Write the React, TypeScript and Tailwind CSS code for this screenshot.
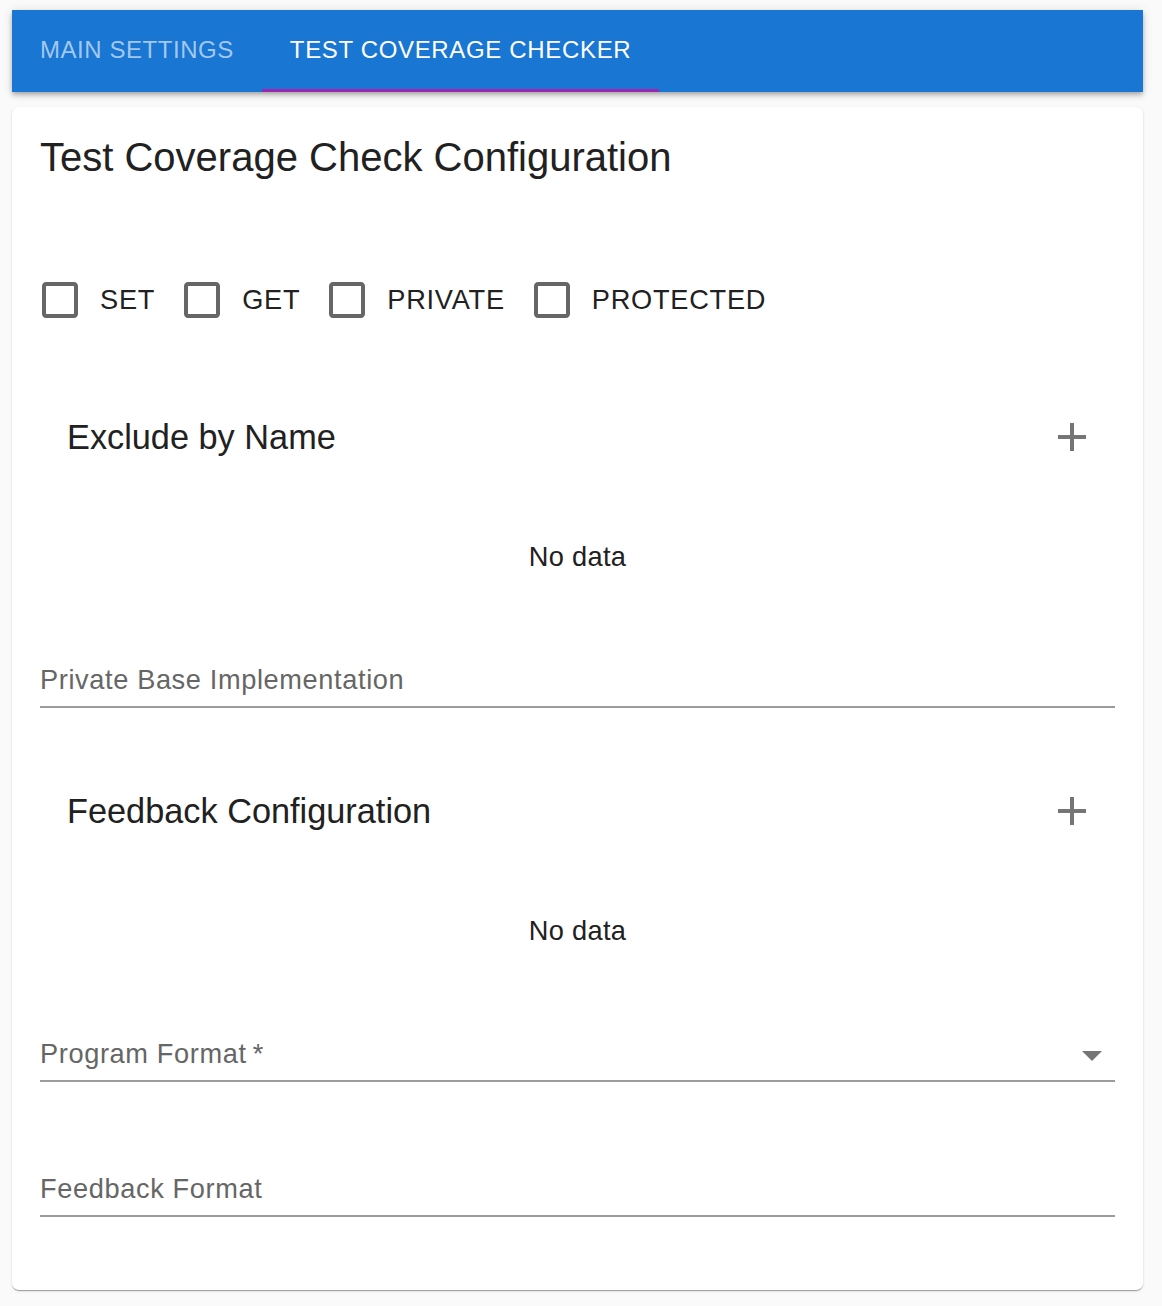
import React from "react";

const font = { fontFamily: '"Liberation Sans", Arial, Helvetica, sans-serif' };

function CheckIcon() {
  return (
    <svg width="48" height="48" viewBox="0 0 24 24" className="shrink-0">
      <path
        fill="#666666"
        d="M19 5v14H5V5h14m0-2H5c-1.11 0-2 .9-2 2v14c0 1.1.89 2 2 2h14c1.1 0 2-.9 2-2V5c0-1.1-.9-2-2-2z"
      />
    </svg>
  );
}

function PlusIcon() {
  return (
    <svg width="48" height="48" viewBox="0 0 24 24" className="shrink-0">
      <path fill="#757575" d="M19 13h-6v6h-2v-6H5v-2h6V5h2v6h6v2z" />
    </svg>
  );
}

function ArrowIcon() {
  return (
    <svg width="48" height="48" viewBox="0 0 24 24" className="shrink-0">
      <path fill="#757575" d="M7 10l5 5 5-5z" />
    </svg>
  );
}

function Check({ label, last }: { label: string; last?: boolean }) {
  return (
    <div className={`flex items-center ${last ? "" : "mr-[23px]"}`}>
      <CheckIcon />
      <span className="ml-[16px] text-[27.2px] leading-[32px] tracking-[0.75px] text-[#212121]">
        {label}
      </span>
    </div>
  );
}

function Section({ title }: { title: string }) {
  return (
    <>
      <div className="flex h-[64px] items-center justify-between pl-[27px] pr-[19px]">
        <span className="text-[34.3px] leading-[40px] text-[#212121]">{title}</span>
        <PlusIcon />
      </div>
      <div className="mt-[68px] flex h-[40px] items-center justify-center">
        <span className="text-[27.2px] leading-[32px] tracking-[0.3px] text-[#212121]">No data</span>
      </div>
    </>
  );
}

function Field({ label, select, className }: { label: string; select?: boolean; className?: string }) {
  return (
    <div className={className}>
      <div className="flex h-[42px] items-start justify-between">
        <span className="text-[27.2px] leading-[32px] tracking-[0.62px] text-[#666666]">{label}</span>
        {select && (
          <div className="-mr-[1px] -mt-[7px]">
            <ArrowIcon />
          </div>
        )}
      </div>
      <div className="h-[2px] bg-[#9b9b9b]" />
    </div>
  );
}

export default function App() {
  return (
    <div className="min-h-[1306px] bg-[#fafafa] pt-[10px]" style={font}>
      <div className="ml-[12px] w-[1131px]">
        <div className="flex h-[82px] bg-[#1976d2] shadow-[0_2px_4px_-1px_rgba(0,0,0,0.2),0_4px_5px_0_rgba(0,0,0,0.14),0_1px_10px_0_rgba(0,0,0,0.12)]">
          <div className="flex h-full items-center px-[28px] pb-[2px]">
            <span className="text-[24px] tracking-[0.55px] text-[#a3c8ed]">MAIN SETTINGS</span>
          </div>
          <div className="relative flex h-full items-center px-[28px] pb-[2px]">
            <span className="text-[24px] tracking-[0.66px] text-white">TEST COVERAGE CHECKER</span>
            <div className="absolute bottom-0 left-0 right-0 h-[3px] bg-[#9c27b0]" />
          </div>
        </div>

        <div className="mt-[15px] rounded-[7px] bg-white px-[28px] pb-[73px] pt-[30px] shadow-[0_2px_1px_-1px_rgba(0,0,0,0.2),0_1px_1px_0_rgba(0,0,0,0.14),0_1px_3px_0_rgba(0,0,0,0.12)]">
          <div className="text-[40px] leading-[40px] text-[#212121]">Test Coverage Check Configuration</div>

          <div className="mt-[99px] flex h-[48px] items-center">
            <div className="-ml-[4px] flex items-center">
              <Check label="SET" />
              <Check label="GET" />
              <Check label="PRIVATE" />
              <Check label="PROTECTED" last />
            </div>
          </div>

          <div className="mt-[81px]">
            <Section title="Exclude by Name" />
          </div>

          <Field label="Private Base Implementation" className="mt-[87px]" />

          <div className="mt-[71px]">
            <Section title="Feedback Configuration" />
          </div>

          <Field label={"Program Format\u2009*"} select className="mt-[87px]" />

          <Field label="Feedback Format" className="mt-[91px]" />
        </div>
      </div>
    </div>
  );
}
